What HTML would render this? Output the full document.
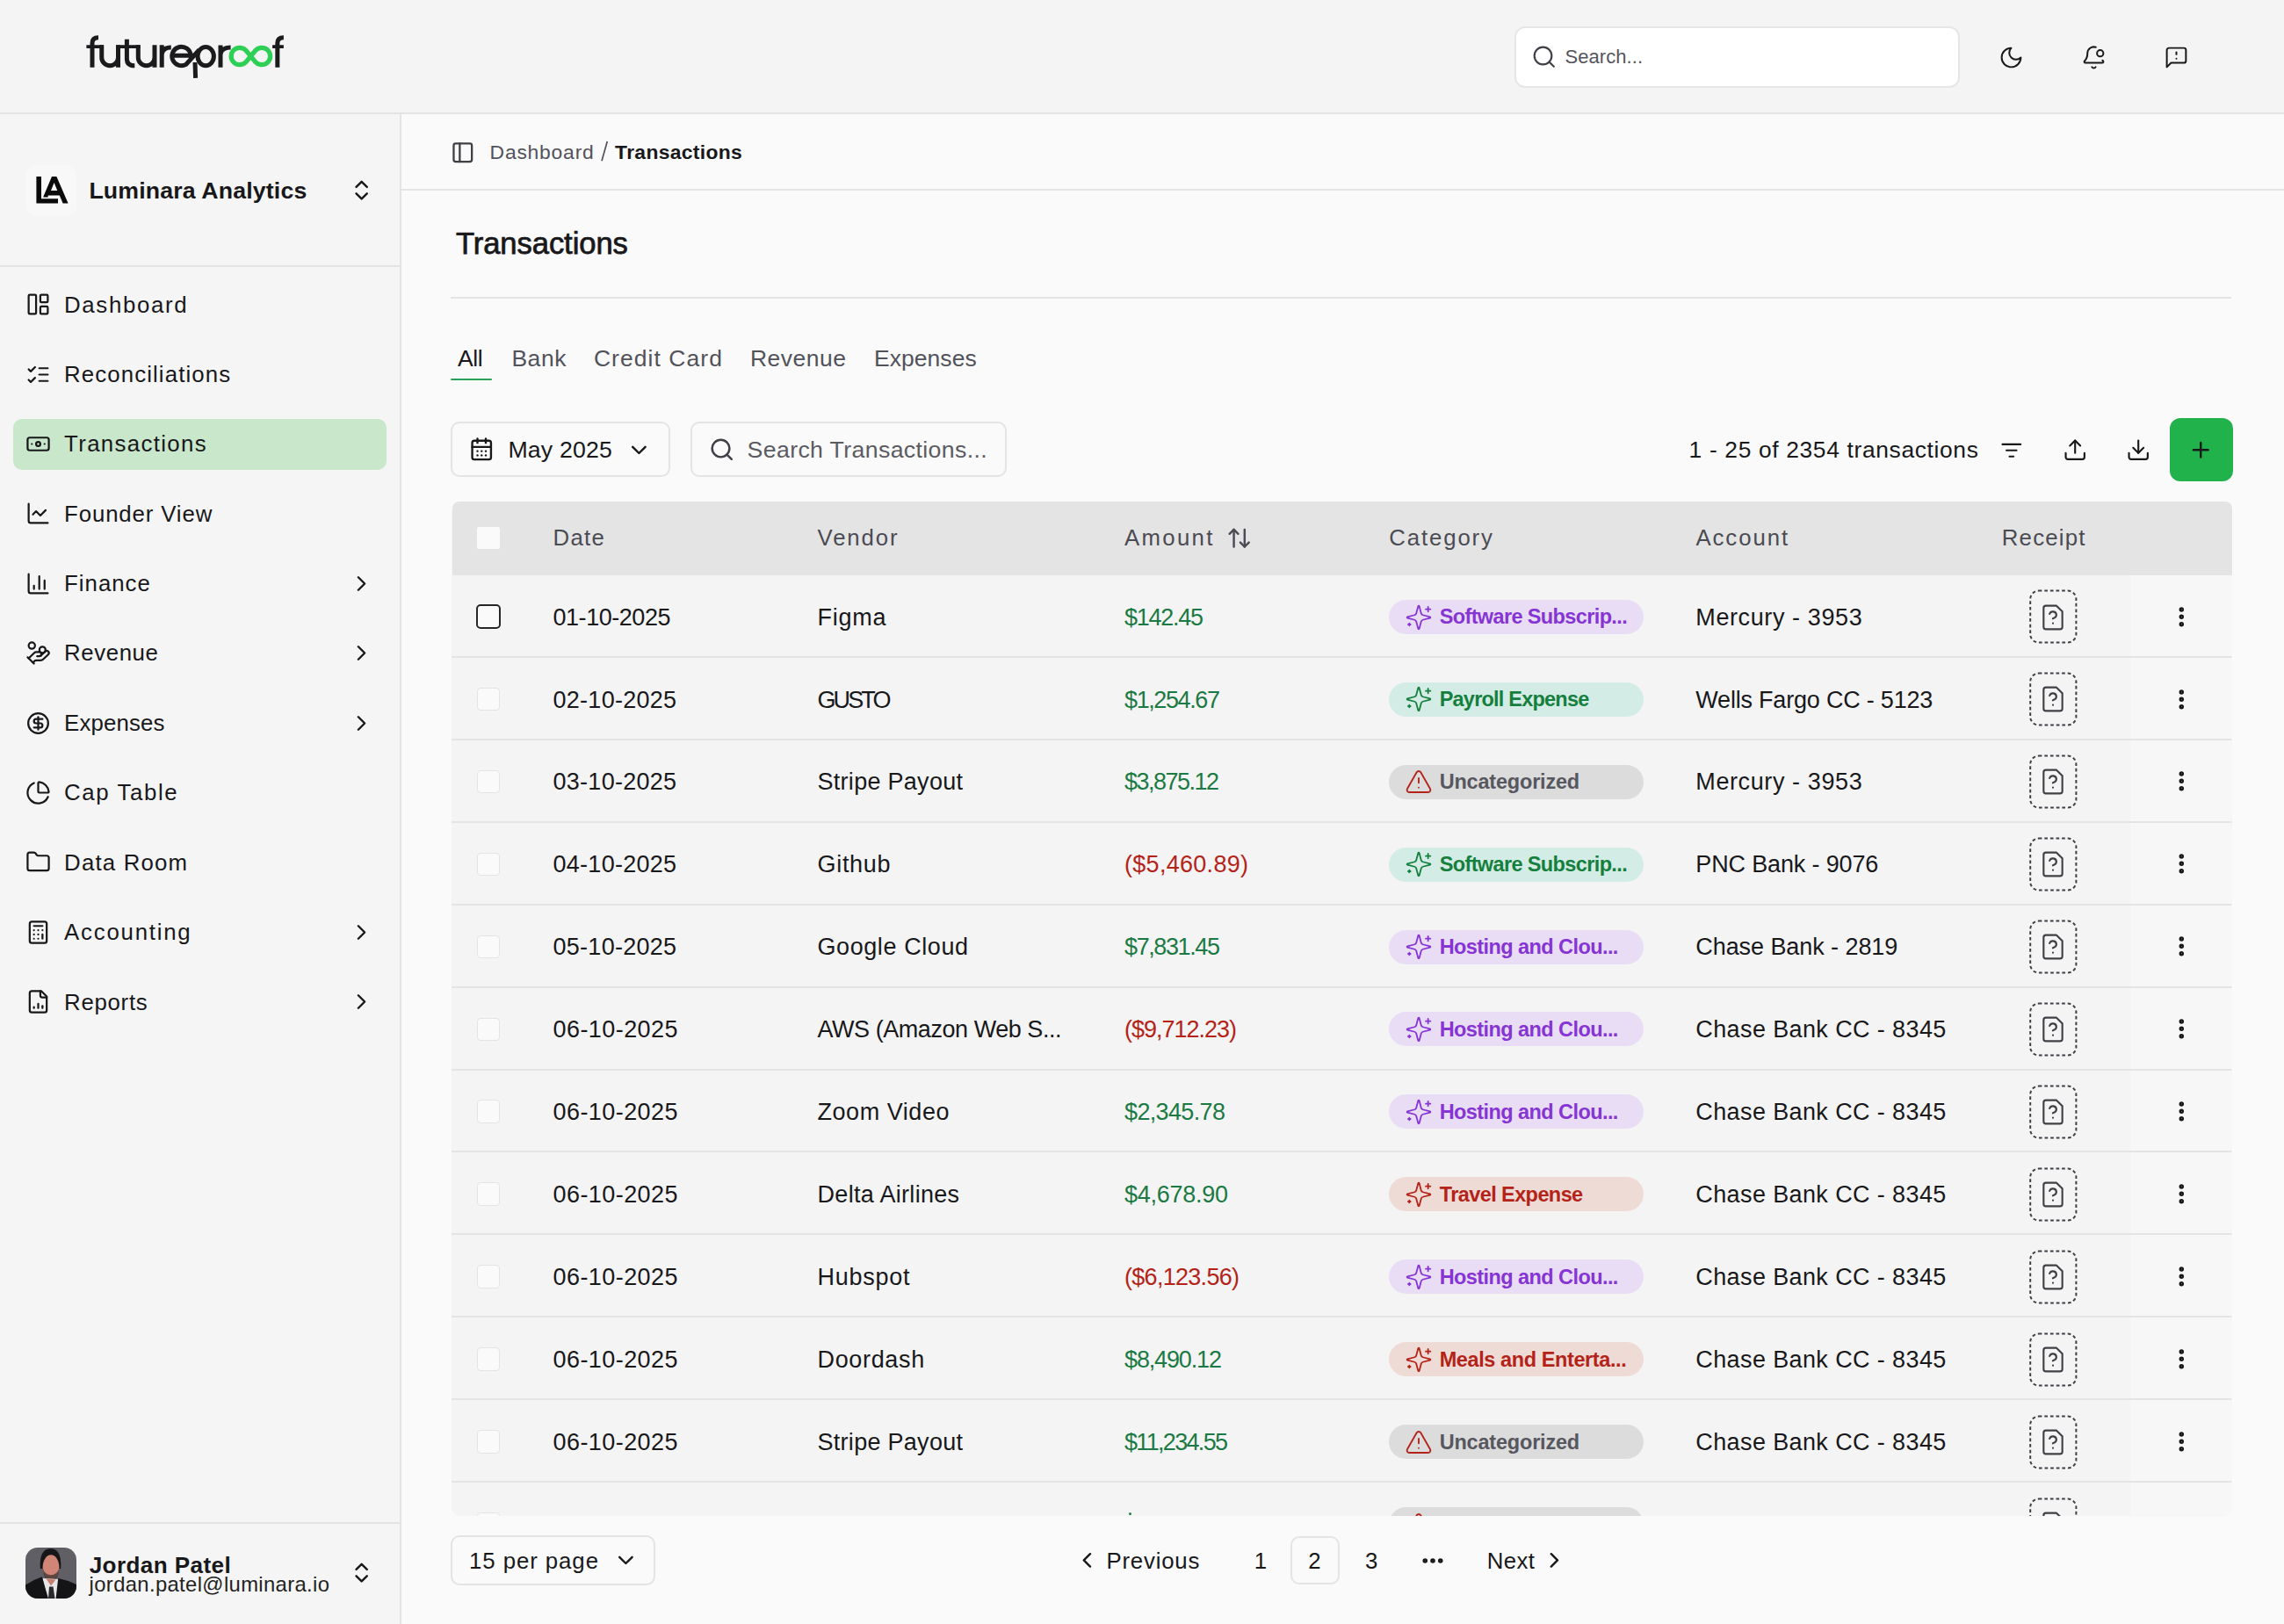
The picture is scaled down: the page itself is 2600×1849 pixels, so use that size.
<!DOCTYPE html><html><head><meta charset="utf-8"><style>
html,body{margin:0;padding:0;}
body{width:2600px;height:1849px;overflow:hidden;position:relative;background:#f4f4f5;font-family:"Liberation Sans",sans-serif;}
.t{position:absolute;white-space:nowrap;}
.r{position:absolute;}
.i{position:absolute;overflow:visible;}
</style></head><body>
<div class="r" style="left:0.00px;top:130.00px;width:455.00px;height:1719.00px;background:#f5f5f5;border-radius:0px;"></div>
<div class="r" style="left:457.00px;top:130.00px;width:2143.00px;height:1719.00px;background:#fafafa;border-radius:0px;"></div>
<div class="r" style="left:0.00px;top:128.00px;width:2600.00px;height:2.00px;background:#e4e4e4;border-radius:0px;"></div>
<div class="r" style="left:455.00px;top:130.00px;width:2.00px;height:1719.00px;background:#e4e4e4;border-radius:0px;"></div>
<svg class="i" style="left:0;top:0;width:340px;height:100px" viewBox="0 0 340 100" fill="none" stroke-linecap="butt">
<g stroke="#1b1b1d" stroke-width="5">
<path d="M105 76.8V49Q105 42.7 112 42.7"/>
<path d="M115.75 51.3V65.4A9.375 9.375 0 0 0 134.5 65.4M134.5 51.3V76.8"/>
<path d="M144.4 44.7V67Q144.4 74.8 153.3 74.8"/>
<path d="M157.3 51.3V65.4A9.35 9.35 0 0 0 176 65.4M176 51.3V76.8"/>
<path d="M184.2 51.3V76.8M184.2 62Q185 54 194.8 54"/>
<path d="M195.75 63.2H217.25A10.75 10.75 0 1 0 211.9 73.3L226.8 56.8"/>
<ellipse cx="234.2" cy="64.1" rx="9.2" ry="10.6"/>
<path d="M222 71L222.6 88.8"/>
<path d="M251 51.5V76.8M251 62Q252 54 262.6 54"/>
<path d="M315.85 76.8V49Q315.85 42.7 322.9 42.7"/>
</g>
<g stroke="#1b1b1d" stroke-width="3.8">
<path d="M98.4 53.2H118M132 53.2H159.6M310.1 53.2H322.9"/>
</g>
<path stroke="#2dcf55" stroke-width="5.3" d="M285.4 64L280.4 70.1A9.7 9.7 0 1 1 280.4 57.9L290.4 70.1A9.7 9.7 0 1 0 290.4 57.9Z"/>
</svg>
<div class="r" style="left:1724.00px;top:30.00px;width:507.00px;height:70.00px;box-sizing:border-box;border:2px solid #e6e6e6;background:#ffffff;border-radius:12px;"></div>
<svg class="i" style="left:1743.45px;top:49.85px;width:29.50px;height:29.50px;" viewBox="0 0 24 24" fill="none" stroke="#3f3f46" stroke-width="1.75" stroke-linecap="round" stroke-linejoin="round"><circle cx="11" cy="11" r="8"/><path d="m21 21-4.3-4.3"/></svg>
<div class="t" style="left:1781.50px;top:54.00px;font-size:22.00px;line-height:22.00px;color:#55555c;letter-spacing:0.069px;">Search...</div>
<svg class="i" style="left:2275.00px;top:50.80px;width:29.00px;height:29.00px;" viewBox="0 0 24 24" fill="none" stroke="#18181b" stroke-width="1.65" stroke-linecap="round" stroke-linejoin="round"><path d="M12 3a6 6 0 0 0 9 9 9 9 0 1 1-9-9Z"/></svg>
<svg class="i" style="left:2369.20px;top:50.80px;width:29.00px;height:29.00px;" viewBox="0 0 24 24" fill="none" stroke="#18181b" stroke-width="1.65" stroke-linecap="round" stroke-linejoin="round"><path d="M10.268 21a2 2 0 0 0 3.464 0"/><path d="M13.916 2.314A6 6 0 0 0 6 8c0 4.499-1.411 5.956-2.74 7.327A1 1 0 0 0 4 17h16a1 1 0 0 0 .74-1.673 9 9 0 0 1-.585-.665"/><circle cx="18" cy="8" r="3"/></svg>
<svg class="i" style="left:2462.70px;top:50.80px;width:29.00px;height:29.00px;" viewBox="0 0 24 24" fill="none" stroke="#18181b" stroke-width="1.65" stroke-linecap="round" stroke-linejoin="round"><path d="M21 15a2 2 0 0 1-2 2H7l-4 4V5a2 2 0 0 1 2-2h14a2 2 0 0 1 2 2z"/><path d="M12 7v2"/><path d="M12 13h.01"/></svg>
<div class="r" style="left:29.00px;top:188.00px;width:58.00px;height:58.00px;background:#f8f8f8;border-radius:12px;"></div>
<svg class="i" style="left:0;top:0;width:100px;height:260px" viewBox="0 0 100 260">
<path fill="#0a0a0a" d="M41.4 200.9H47V226.3H66V231.5H41.4Z"/>
<path fill="#0a0a0a" fill-rule="evenodd" d="M59 201H64.4L77.6 231.5H71.6L67.8 222.5H54.7V224.4H49.1ZM61.6 208L58 217H65.3Z"/>
</svg>
<div class="t" style="left:101.40px;top:204.00px;font-size:26.70px;line-height:26.70px;color:#18181b;letter-spacing:0.158px;font-weight:bold;">Luminara Analytics</div>
<svg class="i" style="left:396.85px;top:202.35px;width:29.30px;height:29.30px;" viewBox="0 0 24 24" fill="none" stroke="#18181b" stroke-width="2" stroke-linecap="round" stroke-linejoin="round"><path d="m7 15 5 5 5-5"/><path d="m7 9 5-5 5 5"/></svg>
<div class="r" style="left:0.00px;top:302.00px;width:455.00px;height:2.00px;background:#e4e4e4;border-radius:0px;"></div>
<div class="r" style="left:15.00px;top:477.00px;width:425.00px;height:58.00px;background:#c9e7ca;border-radius:10px;"></div>
<svg class="i" style="left:28.80px;top:332.10px;width:29.00px;height:29.00px;" viewBox="0 0 24 24" fill="none" stroke="#18181b" stroke-width="1.85" stroke-linecap="round" stroke-linejoin="round"><rect width="7" height="18" x="3" y="3" rx="1"/><rect width="7" height="7" x="14" y="3" rx="1"/><rect width="7" height="7" x="14" y="14" rx="1"/></svg>
<div class="t" style="left:73.10px;top:335.00px;font-size:25.80px;line-height:25.80px;color:#18181b;letter-spacing:1.648px;">Dashboard</div>
<svg class="i" style="left:28.80px;top:411.50px;width:29.00px;height:29.00px;" viewBox="0 0 24 24" fill="none" stroke="#18181b" stroke-width="1.85" stroke-linecap="round" stroke-linejoin="round"><path d="m3 17 2 2 4-4"/><path d="m3 7 2 2 4-4"/><path d="M13 6h8"/><path d="M13 12h8"/><path d="M13 18h8"/></svg>
<div class="t" style="left:73.10px;top:414.00px;font-size:25.80px;line-height:25.80px;color:#18181b;letter-spacing:1.105px;">Reconciliations</div>
<svg class="i" style="left:28.80px;top:490.90px;width:29.00px;height:29.00px;" viewBox="0 0 24 24" fill="none" stroke="#18181b" stroke-width="1.85" stroke-linecap="round" stroke-linejoin="round"><rect width="20" height="12" x="2" y="6" rx="2"/><circle cx="12" cy="12" r="2"/><path d="M6 12h.01M18 12h.01"/></svg>
<div class="t" style="left:73.10px;top:493.00px;font-size:25.80px;line-height:25.80px;color:#18181b;letter-spacing:1.341px;">Transactions</div>
<svg class="i" style="left:28.80px;top:570.30px;width:29.00px;height:29.00px;" viewBox="0 0 24 24" fill="none" stroke="#18181b" stroke-width="1.85" stroke-linecap="round" stroke-linejoin="round"><path d="M3 3v16a2 2 0 0 0 2 2h16"/><path d="m19 9-5 5-4-4-3 3"/></svg>
<div class="t" style="left:73.10px;top:573.00px;font-size:25.80px;line-height:25.80px;color:#18181b;letter-spacing:0.864px;">Founder View</div>
<svg class="i" style="left:28.80px;top:649.70px;width:29.00px;height:29.00px;" viewBox="0 0 24 24" fill="none" stroke="#18181b" stroke-width="1.85" stroke-linecap="round" stroke-linejoin="round"><path d="M3 3v16a2 2 0 0 0 2 2h16"/><path d="M18 17V9"/><path d="M13 17V5"/><path d="M8 17v-3"/></svg>
<div class="t" style="left:73.10px;top:652.00px;font-size:25.80px;line-height:25.80px;color:#18181b;letter-spacing:0.984px;">Finance</div>
<svg class="i" style="left:397.25px;top:649.70px;width:29.00px;height:29.00px;" viewBox="0 0 24 24" fill="none" stroke="#18181b" stroke-width="2" stroke-linecap="round" stroke-linejoin="round"><path d="m9 18 6-6-6-6"/></svg>
<svg class="i" style="left:28.80px;top:729.10px;width:29.00px;height:29.00px;" viewBox="0 0 24 24" fill="none" stroke="#18181b" stroke-width="1.85" stroke-linecap="round" stroke-linejoin="round"><path d="M11 15h2a2 2 0 1 0 0-4h-3c-.6 0-1.1.2-1.4.6L3 17"/><path d="m7 21 1.6-1.4c.3-.4.8-.6 1.4-.6h4c1.1 0 2.1-.4 2.8-1.2l4.6-4.4a2 2 0 0 0-2.75-2.91l-4.2 3.9"/><path d="m2 16 6 6"/><circle cx="16" cy="9" r="2.9"/><circle cx="6" cy="5" r="3"/></svg>
<div class="t" style="left:73.10px;top:731.00px;font-size:25.80px;line-height:25.80px;color:#18181b;letter-spacing:0.587px;">Revenue</div>
<svg class="i" style="left:397.25px;top:729.10px;width:29.00px;height:29.00px;" viewBox="0 0 24 24" fill="none" stroke="#18181b" stroke-width="2" stroke-linecap="round" stroke-linejoin="round"><path d="m9 18 6-6-6-6"/></svg>
<svg class="i" style="left:28.80px;top:808.50px;width:29.00px;height:29.00px;" viewBox="0 0 24 24" fill="none" stroke="#18181b" stroke-width="1.85" stroke-linecap="round" stroke-linejoin="round"><circle cx="12" cy="12" r="9.4"/><path d="M16 8h-6a2 2 0 1 0 0 4h4a2 2 0 1 1 0 4H8"/><path d="M12 18V6"/></svg>
<div class="t" style="left:73.10px;top:811.00px;font-size:25.80px;line-height:25.80px;color:#18181b;letter-spacing:0.155px;">Expenses</div>
<svg class="i" style="left:397.25px;top:808.50px;width:29.00px;height:29.00px;" viewBox="0 0 24 24" fill="none" stroke="#18181b" stroke-width="2" stroke-linecap="round" stroke-linejoin="round"><path d="m9 18 6-6-6-6"/></svg>
<svg class="i" style="left:28.80px;top:887.90px;width:29.00px;height:29.00px;" viewBox="0 0 24 24" fill="none" stroke="#18181b" stroke-width="1.85" stroke-linecap="round" stroke-linejoin="round"><path d="M21 12c.552 0 1.005-.449.95-.998a10 10 0 0 0-8.953-8.951c-.55-.055-.998.398-.998.95v8a1 1 0 0 0 1 1z"/><path d="M21.21 15.89A10 10 0 1 1 8 2.83"/></svg>
<div class="t" style="left:73.10px;top:890.00px;font-size:25.80px;line-height:25.80px;color:#18181b;letter-spacing:1.611px;">Cap Table</div>
<svg class="i" style="left:28.80px;top:967.30px;width:29.00px;height:29.00px;" viewBox="0 0 24 24" fill="none" stroke="#18181b" stroke-width="1.85" stroke-linecap="round" stroke-linejoin="round"><path d="M20 20a2 2 0 0 0 2-2V8a2 2 0 0 0-2-2h-7.9a2 2 0 0 1-1.69-.9L9.6 3.9A2 2 0 0 0 7.93 3H4a2 2 0 0 0-2 2v13a2 2 0 0 0 2 2Z"/></svg>
<div class="t" style="left:73.10px;top:970.00px;font-size:25.80px;line-height:25.80px;color:#18181b;letter-spacing:1.188px;">Data Room</div>
<svg class="i" style="left:28.80px;top:1046.70px;width:29.00px;height:29.00px;" viewBox="0 0 24 24" fill="none" stroke="#18181b" stroke-width="1.85" stroke-linecap="round" stroke-linejoin="round"><rect width="16" height="20" x="4" y="2" rx="2"/><line x1="8" x2="16" y1="6" y2="6"/><line x1="16" x2="16" y1="14" y2="18"/><path d="M16 10h.01"/><path d="M12 10h.01"/><path d="M8 10h.01"/><path d="M12 14h.01"/><path d="M8 14h.01"/><path d="M12 18h.01"/><path d="M8 18h.01"/></svg>
<div class="t" style="left:73.10px;top:1049.00px;font-size:25.80px;line-height:25.80px;color:#18181b;letter-spacing:1.771px;">Accounting</div>
<svg class="i" style="left:397.25px;top:1046.70px;width:29.00px;height:29.00px;" viewBox="0 0 24 24" fill="none" stroke="#18181b" stroke-width="2" stroke-linecap="round" stroke-linejoin="round"><path d="m9 18 6-6-6-6"/></svg>
<svg class="i" style="left:28.80px;top:1126.10px;width:29.00px;height:29.00px;" viewBox="0 0 24 24" fill="none" stroke="#18181b" stroke-width="1.85" stroke-linecap="round" stroke-linejoin="round"><path d="M15 2H6a2 2 0 0 0-2 2v16a2 2 0 0 0 2 2h12a2 2 0 0 0 2-2V7Z"/><path d="M14 2v4a2 2 0 0 0 2 2h4"/><path d="M8 18v-1"/><path d="M12 18v-4"/><path d="M16 18v-2"/></svg>
<div class="t" style="left:73.10px;top:1129.00px;font-size:25.80px;line-height:25.80px;color:#18181b;letter-spacing:0.712px;">Reports</div>
<svg class="i" style="left:397.25px;top:1126.10px;width:29.00px;height:29.00px;" viewBox="0 0 24 24" fill="none" stroke="#18181b" stroke-width="2" stroke-linecap="round" stroke-linejoin="round"><path d="m9 18 6-6-6-6"/></svg>
<div class="r" style="left:0.00px;top:1733.00px;width:455.00px;height:2.00px;background:#e4e4e4;border-radius:0px;"></div>
<svg class="i" style="left:29px;top:1762px;width:58px;height:58px;border-radius:14px;overflow:hidden" viewBox="0 0 58 58">
<rect width="58" height="58" fill="#5f5f65"/>
<path d="M16.8 24Q15.5 1.2 28.5 1.2Q41.5 1.2 40.2 24Z" fill="#161618"/>
<ellipse cx="29" cy="22.5" rx="9.4" ry="14.3" fill="#d08576"/>
<path d="M19.8 24Q20.5 37.5 29 37.8Q37.5 37.5 38.2 24Q36 31 29 31.2Q22 31 19.8 24Z" fill="#3b2f2d" opacity="0.75"/>
<path d="M19.5 35L38.5 36L35.8 58H25Z" fill="#e6e6e8"/>
<path d="M23.5 35.5L34.5 36.5L29 43.5Z" fill="#c98070"/>
<path d="M27 44.5L31.5 44.5L33.5 58H26Z" fill="#2a2a2d"/>
<path d="M0 42.5Q8 37 18.8 33.3L26 58H0Z" fill="#141416"/>
<path d="M58 42Q48 37 37.2 35L34.6 58H58Z" fill="#141416"/>
</svg>
<div class="t" style="left:101.70px;top:1769.00px;font-size:26.10px;line-height:26.10px;color:#18181b;letter-spacing:0.395px;font-weight:bold;">Jordan Patel</div>
<div class="t" style="left:101.59px;top:1792.00px;font-size:23.80px;line-height:23.80px;color:#222;letter-spacing:0.368px;">jordan.patel@luminara.io</div>
<svg class="i" style="left:396.75px;top:1776.35px;width:29.30px;height:29.30px;" viewBox="0 0 24 24" fill="none" stroke="#18181b" stroke-width="2" stroke-linecap="round" stroke-linejoin="round"><path d="m7 15 5 5 5-5"/><path d="m7 9 5-5 5 5"/></svg>
<svg class="i" style="left:513.40px;top:159.50px;width:27.60px;height:27.60px;" viewBox="0 0 24 24" fill="none" stroke="#3f3f46" stroke-width="2" stroke-linecap="round" stroke-linejoin="round"><rect width="18" height="18" x="3" y="3" rx="2"/><path d="M9 3v18"/></svg>
<div class="t" style="left:557.60px;top:162.00px;font-size:22.90px;line-height:22.90px;color:#52525b;letter-spacing:0.772px;">Dashboard</div>
<svg class="i" style="left:680px;top:156px;width:16px;height:32px" viewBox="680 156 16 32"><path d="M691.3 161L685 183.2" stroke="#52525b" stroke-width="1.7" stroke-linecap="butt"/></svg>
<div class="t" style="left:700.10px;top:162.00px;font-size:22.90px;line-height:22.90px;color:#18181b;letter-spacing:0.321px;font-weight:bold;">Transactions</div>
<div class="r" style="left:457.00px;top:215.00px;width:2143.00px;height:2.00px;background:#e4e4e4;border-radius:0px;"></div>
<div class="t" style="left:519.00px;top:260.00px;font-size:34.60px;line-height:34.60px;color:#18181b;letter-spacing:-0.073px;-webkit-text-stroke:0.75px #18181b;">Transactions</div>
<div class="r" style="left:513.00px;top:337.50px;width:2027.00px;height:2.00px;background:#e4e4e4;border-radius:0px;"></div>
<div class="t" style="left:521.00px;top:395.00px;font-size:26.50px;line-height:26.50px;color:#18181b;letter-spacing:-0.371px;">All</div>
<div class="t" style="left:582.40px;top:395.00px;font-size:26.50px;line-height:26.50px;color:#52525b;letter-spacing:0.551px;">Bank</div>
<div class="t" style="left:675.90px;top:395.00px;font-size:26.50px;line-height:26.50px;color:#52525b;letter-spacing:1.061px;">Credit Card</div>
<div class="t" style="left:854.00px;top:395.00px;font-size:26.50px;line-height:26.50px;color:#52525b;letter-spacing:0.487px;">Revenue</div>
<div class="t" style="left:995.00px;top:395.00px;font-size:26.50px;line-height:26.50px;color:#52525b;letter-spacing:0.045px;">Expenses</div>
<div class="r" style="left:512.70px;top:431.40px;width:47.30px;height:2.10px;background:#25a354;border-radius:1px;"></div>
<div class="r" style="left:513.00px;top:480.00px;width:250.00px;height:63.00px;box-sizing:border-box;border:2px solid #e4e4e4;background:transparent;border-radius:10px;"></div>
<svg class="i" style="left:534.25px;top:497.45px;width:28.50px;height:28.50px;" viewBox="0 0 24 24" fill="none" stroke="#18181b" stroke-width="2" stroke-linecap="round" stroke-linejoin="round"><path d="M8 2v4"/><path d="M16 2v4"/><rect width="18" height="18" x="3" y="4" rx="2"/><path d="M3 10h18"/><path d="M8 14h.01"/><path d="M12 14h.01"/><path d="M16 14h.01"/><path d="M8 18h.01"/><path d="M12 18h.01"/><path d="M16 18h.01"/></svg>
<div class="t" style="left:578.40px;top:499.00px;font-size:26.70px;line-height:26.70px;color:#18181b;letter-spacing:0.191px;">May 2025</div>
<svg class="i" style="left:713.00px;top:497.60px;width:28.80px;height:28.80px;" viewBox="0 0 24 24" fill="none" stroke="#18181b" stroke-width="2" stroke-linecap="round" stroke-linejoin="round"><path d="m6 9 6 6 6-6"/></svg>
<div class="r" style="left:786.00px;top:480.00px;width:360.00px;height:63.00px;box-sizing:border-box;border:2px solid #e4e4e4;background:transparent;border-radius:10px;"></div>
<svg class="i" style="left:806.95px;top:496.75px;width:29.50px;height:29.50px;" viewBox="0 0 24 24" fill="none" stroke="#3f3f46" stroke-width="2" stroke-linecap="round" stroke-linejoin="round"><circle cx="11" cy="11" r="8"/><path d="m21 21-4.3-4.3"/></svg>
<div class="t" style="left:850.60px;top:499.00px;font-size:26.70px;line-height:26.70px;color:#5b5b63;letter-spacing:0.360px;">Search Transactions...</div>
<div class="t" style="left:1922.60px;top:499.00px;font-size:26.40px;line-height:26.40px;color:#18181b;letter-spacing:0.646px;">1 - 25 of 2354 transactions</div>
<svg class="i" style="left:2275.70px;top:498.70px;width:27.60px;height:27.60px;" viewBox="0 0 24 24" fill="none" stroke="#18181b" stroke-width="1.8" stroke-linecap="round" stroke-linejoin="round"><path d="M3 6h18"/><path d="M7 12h10"/><path d="M10 18h4"/></svg>
<svg class="i" style="left:2347.50px;top:498.30px;width:28.40px;height:28.40px;" viewBox="0 0 24 24" fill="none" stroke="#18181b" stroke-width="1.8" stroke-linecap="round" stroke-linejoin="round"><path d="M21 15v4a2 2 0 0 1-2 2H5a2 2 0 0 1-2-2v-4"/><polyline points="17 8 12 3 7 8"/><line x1="12" x2="12" y1="3" y2="15"/></svg>
<svg class="i" style="left:2419.60px;top:498.30px;width:28.40px;height:28.40px;" viewBox="0 0 24 24" fill="none" stroke="#18181b" stroke-width="1.8" stroke-linecap="round" stroke-linejoin="round"><path d="M21 15v4a2 2 0 0 1-2 2H5a2 2 0 0 1-2-2v-4"/><polyline points="7 10 12 15 17 10"/><line x1="12" x2="12" y1="15" y2="3"/></svg>
<div class="r" style="left:2470.00px;top:476.00px;width:72.00px;height:72.00px;background:#22b24c;border-radius:12px;"></div>
<svg class="i" style="left:2491.25px;top:497.75px;width:28.50px;height:28.50px;" viewBox="0 0 24 24" fill="none" stroke="#18181b" stroke-width="2" stroke-linecap="round" stroke-linejoin="round"><path d="M5 12h14"/><path d="M12 5v14"/></svg>
<div class="r" style="left:514px;top:571px;width:2026.5px;height:1155px;border-radius:10px;overflow:hidden;background:#f4f4f5">
</div>
<div class="r" style="left:514.50px;top:571.00px;width:2026.00px;height:84.00px;background:#e4e4e5;border-radius:0px;border-radius:8px 8px 0 0;"></div>
<div class="r" style="left:543.40px;top:600.00px;width:26.00px;height:25.00px;background:#fafafa;border-radius:2.5px;"></div>
<div class="t" style="left:629.50px;top:600.00px;font-size:25.80px;line-height:25.80px;color:#4b4b53;letter-spacing:1.303px;">Date</div>
<div class="t" style="left:930.50px;top:600.00px;font-size:25.80px;line-height:25.80px;color:#4b4b53;letter-spacing:1.848px;">Vendor</div>
<div class="t" style="left:1280.10px;top:600.00px;font-size:25.80px;line-height:25.80px;color:#4b4b53;letter-spacing:2.279px;">Amount</div>
<div class="t" style="left:1581.20px;top:600.00px;font-size:25.80px;line-height:25.80px;color:#4b4b53;letter-spacing:1.872px;">Category</div>
<div class="t" style="left:1930.40px;top:600.00px;font-size:25.80px;line-height:25.80px;color:#4b4b53;letter-spacing:1.914px;">Account</div>
<div class="t" style="left:2278.80px;top:600.00px;font-size:25.80px;line-height:25.80px;color:#4b4b53;letter-spacing:1.185px;">Receipt</div>
<svg class="i" style="left:1396.20px;top:597.60px;width:29.40px;height:29.40px;" viewBox="0 0 24 24" fill="none" stroke="#4b4b53" stroke-width="2" stroke-linecap="round" stroke-linejoin="round"><path d="m21 16-4 4-4-4"/><path d="M17 20V4"/><path d="m3 8 4-4 4 4"/><path d="M7 4v16"/></svg>
<div class="r" style="left:0;top:655px;width:2600px;height:1071px;overflow:hidden;clip-path:inset(0 59.5px 0 514px round 0 0 10px 10px)">
<div class="r" style="left:2425.00px;top:0.00px;width:115.50px;height:1070.00px;background:#f7f7f7;border-radius:0px;"></div>
<div class="r" style="left:514.00px;top:91.90px;width:2026.50px;height:2.00px;background:#e4e4e4;border-radius:0px;"></div>
<div class="r" style="left:542.00px;top:33.00px;width:28.30px;height:28.40px;box-sizing:border-box;border:2.1px solid #27272a;background:#fafafa;border-radius:5px;"></div>
<div class="t" style="left:629.50px;top:35.00px;font-size:27.00px;line-height:27.00px;color:#18181b;letter-spacing:-0.456px;">01-10-2025</div>
<div class="t" style="left:930.50px;top:35.00px;font-size:27.00px;line-height:27.00px;color:#18181b;letter-spacing:0.742px;">Figma</div>
<div class="t" style="left:1280.00px;top:35.00px;font-size:27.00px;line-height:27.00px;color:#1b7a43;letter-spacing:-1.268px;">$142.45</div>
<div class="r" style="left:1580.70px;top:27.80px;width:290.70px;height:39.00px;background:#e9ddf5;border-radius:19.5px;"></div>
<svg class="i" style="left:1598.50px;top:31.50px;width:32.00px;height:32.00px;" viewBox="0 0 24 24" fill="none" stroke="#8634d4" stroke-width="1.35" stroke-linecap="round" stroke-linejoin="round"><path d="M9.937 15.5A2 2 0 0 0 8.5 14.063l-6.135-1.582a.5.5 0 0 1 0-.962L8.5 9.936A2 2 0 0 0 9.937 8.5l1.582-6.135a.5.5 0 0 1 .963 0L14.063 8.5A2 2 0 0 0 15.5 9.937l6.135 1.581a.5.5 0 0 1 0 .964L15.5 14.063a2 2 0 0 0-1.437 1.437l-1.582 6.135a.5.5 0 0 1-.963 0z"/><path d="M20 3v4"/><path d="M22 5h-4"/><path d="M4 17v2"/><path d="M5 18H3"/></svg>
<div class="t" style="left:1638.70px;top:36.00px;font-size:23.50px;line-height:23.50px;color:#8634d4;letter-spacing:-0.627px;font-weight:bold;">Software Subscrip...</div>
<div class="t" style="left:1930.30px;top:35.00px;font-size:27.00px;line-height:27.00px;color:#18181b;letter-spacing:0.602px;">Mercury - 3953</div>
<svg class="i" style="left:2309px;top:15.30px;width:57px;height:64px" viewBox="0 0 57 64"><rect x="2.2" y="2.6" width="52.2" height="58.9" rx="9.5" fill="none" stroke="#3f3f46" stroke-width="2" stroke-dasharray="3.7 2.9"/></svg>
<svg class="i" style="left:2321.30px;top:31.50px;width:32.00px;height:32.00px;" viewBox="0 0 24 24" fill="none" stroke="#3f3f46" stroke-width="1.6" stroke-linecap="round" stroke-linejoin="round"><path d="M12 17h.01"/><path d="M15 2H6a2 2 0 0 0-2 2v16a2 2 0 0 0 2 2h12a2 2 0 0 0 2-2V7z"/><path d="M9.1 9a3 3 0 0 1 5.82 1c0 2-3 3-3 3"/></svg>
<svg class="i" style="left:2469.30px;top:32.60px;width:28.60px;height:28.60px;" viewBox="0 0 24 24" fill="none" stroke="#18181b" stroke-width="2.6" stroke-linecap="round" stroke-linejoin="round"><circle cx="12" cy="12" r="1"/><circle cx="12" cy="5" r="1"/><circle cx="12" cy="19" r="1"/></svg>
<div class="r" style="left:514.00px;top:185.83px;width:2026.50px;height:2.00px;background:#e4e4e4;border-radius:0px;"></div>
<div class="r" style="left:542.60px;top:127.83px;width:26.80px;height:26.60px;box-sizing:border-box;border:1.3px solid #e4e4e4;background:#fafafa;border-radius:4px;"></div>
<div class="t" style="left:629.50px;top:129.00px;font-size:27.00px;line-height:27.00px;color:#18181b;letter-spacing:0.277px;">02-10-2025</div>
<div class="t" style="left:930.50px;top:129.00px;font-size:27.00px;line-height:27.00px;color:#18181b;letter-spacing:-2.881px;">GUSTO</div>
<div class="t" style="left:1280.00px;top:129.00px;font-size:27.00px;line-height:27.00px;color:#1b7a43;letter-spacing:-1.390px;">$1,254.67</div>
<div class="r" style="left:1580.70px;top:121.73px;width:290.70px;height:39.00px;background:#d3ece6;border-radius:19.5px;"></div>
<svg class="i" style="left:1598.50px;top:125.43px;width:32.00px;height:32.00px;" viewBox="0 0 24 24" fill="none" stroke="#15803d" stroke-width="1.35" stroke-linecap="round" stroke-linejoin="round"><path d="M9.937 15.5A2 2 0 0 0 8.5 14.063l-6.135-1.582a.5.5 0 0 1 0-.962L8.5 9.936A2 2 0 0 0 9.937 8.5l1.582-6.135a.5.5 0 0 1 .963 0L14.063 8.5A2 2 0 0 0 15.5 9.937l6.135 1.581a.5.5 0 0 1 0 .964L15.5 14.063a2 2 0 0 0-1.437 1.437l-1.582 6.135a.5.5 0 0 1-.963 0z"/><path d="M20 3v4"/><path d="M22 5h-4"/><path d="M4 17v2"/><path d="M5 18H3"/></svg>
<div class="t" style="left:1638.70px;top:130.00px;font-size:23.50px;line-height:23.50px;color:#15803d;letter-spacing:-0.783px;font-weight:bold;">Payroll Expense</div>
<div class="t" style="left:1930.30px;top:129.00px;font-size:27.00px;line-height:27.00px;color:#18181b;letter-spacing:-0.205px;">Wells Fargo CC - 5123</div>
<svg class="i" style="left:2309px;top:109.23px;width:57px;height:64px" viewBox="0 0 57 64"><rect x="2.2" y="2.6" width="52.2" height="58.9" rx="9.5" fill="none" stroke="#3f3f46" stroke-width="2" stroke-dasharray="3.7 2.9"/></svg>
<svg class="i" style="left:2321.30px;top:125.43px;width:32.00px;height:32.00px;" viewBox="0 0 24 24" fill="none" stroke="#3f3f46" stroke-width="1.6" stroke-linecap="round" stroke-linejoin="round"><path d="M12 17h.01"/><path d="M15 2H6a2 2 0 0 0-2 2v16a2 2 0 0 0 2 2h12a2 2 0 0 0 2-2V7z"/><path d="M9.1 9a3 3 0 0 1 5.82 1c0 2-3 3-3 3"/></svg>
<svg class="i" style="left:2469.30px;top:126.53px;width:28.60px;height:28.60px;" viewBox="0 0 24 24" fill="none" stroke="#18181b" stroke-width="2.6" stroke-linecap="round" stroke-linejoin="round"><circle cx="12" cy="12" r="1"/><circle cx="12" cy="5" r="1"/><circle cx="12" cy="19" r="1"/></svg>
<div class="r" style="left:514.00px;top:279.76px;width:2026.50px;height:2.00px;background:#e4e4e4;border-radius:0px;"></div>
<div class="r" style="left:542.60px;top:221.76px;width:26.80px;height:26.60px;box-sizing:border-box;border:1.3px solid #e4e4e4;background:#fafafa;border-radius:4px;"></div>
<div class="t" style="left:629.50px;top:222.00px;font-size:27.00px;line-height:27.00px;color:#18181b;letter-spacing:0.277px;">03-10-2025</div>
<div class="t" style="left:930.50px;top:222.00px;font-size:27.00px;line-height:27.00px;color:#18181b;letter-spacing:0.285px;">Stripe Payout</div>
<div class="t" style="left:1280.00px;top:222.00px;font-size:27.00px;line-height:27.00px;color:#1b7a43;letter-spacing:-1.515px;">$3,875.12</div>
<div class="r" style="left:1580.70px;top:215.66px;width:290.70px;height:39.00px;background:#dcdcdd;border-radius:19.5px;"></div>
<svg class="i" style="left:1598.50px;top:219.16px;width:32.00px;height:32.00px;" viewBox="0 0 24 24" fill="none" stroke="#b42318" stroke-width="1.4" stroke-linecap="round" stroke-linejoin="round"><path d="m21.73 18-8-14a2 2 0 0 0-3.48 0l-8 14A2 2 0 0 0 4 21h16a2 2 0 0 0 1.73-3"/><path d="M12 9v4"/><path d="M12 17h.01"/></svg>
<div class="t" style="left:1638.70px;top:224.00px;font-size:23.50px;line-height:23.50px;color:#57575f;letter-spacing:-0.201px;font-weight:bold;">Uncategorized</div>
<div class="t" style="left:1930.30px;top:222.00px;font-size:27.00px;line-height:27.00px;color:#18181b;letter-spacing:0.602px;">Mercury - 3953</div>
<svg class="i" style="left:2309px;top:203.16px;width:57px;height:64px" viewBox="0 0 57 64"><rect x="2.2" y="2.6" width="52.2" height="58.9" rx="9.5" fill="none" stroke="#3f3f46" stroke-width="2" stroke-dasharray="3.7 2.9"/></svg>
<svg class="i" style="left:2321.30px;top:219.36px;width:32.00px;height:32.00px;" viewBox="0 0 24 24" fill="none" stroke="#3f3f46" stroke-width="1.6" stroke-linecap="round" stroke-linejoin="round"><path d="M12 17h.01"/><path d="M15 2H6a2 2 0 0 0-2 2v16a2 2 0 0 0 2 2h12a2 2 0 0 0 2-2V7z"/><path d="M9.1 9a3 3 0 0 1 5.82 1c0 2-3 3-3 3"/></svg>
<svg class="i" style="left:2469.30px;top:220.46px;width:28.60px;height:28.60px;" viewBox="0 0 24 24" fill="none" stroke="#18181b" stroke-width="2.6" stroke-linecap="round" stroke-linejoin="round"><circle cx="12" cy="12" r="1"/><circle cx="12" cy="5" r="1"/><circle cx="12" cy="19" r="1"/></svg>
<div class="r" style="left:514.00px;top:373.69px;width:2026.50px;height:2.00px;background:#e4e4e4;border-radius:0px;"></div>
<div class="r" style="left:542.60px;top:315.69px;width:26.80px;height:26.60px;box-sizing:border-box;border:1.3px solid #e4e4e4;background:#fafafa;border-radius:4px;"></div>
<div class="t" style="left:629.50px;top:316.00px;font-size:27.00px;line-height:27.00px;color:#18181b;letter-spacing:0.277px;">04-10-2025</div>
<div class="t" style="left:930.50px;top:316.00px;font-size:27.00px;line-height:27.00px;color:#18181b;letter-spacing:0.692px;">Github</div>
<div class="t" style="left:1280.00px;top:316.00px;font-size:27.00px;line-height:27.00px;color:#b42318;letter-spacing:0.290px;">($5,460.89)</div>
<div class="r" style="left:1580.70px;top:309.59px;width:290.70px;height:39.00px;background:#d3ece6;border-radius:19.5px;"></div>
<svg class="i" style="left:1598.50px;top:313.29px;width:32.00px;height:32.00px;" viewBox="0 0 24 24" fill="none" stroke="#15803d" stroke-width="1.35" stroke-linecap="round" stroke-linejoin="round"><path d="M9.937 15.5A2 2 0 0 0 8.5 14.063l-6.135-1.582a.5.5 0 0 1 0-.962L8.5 9.936A2 2 0 0 0 9.937 8.5l1.582-6.135a.5.5 0 0 1 .963 0L14.063 8.5A2 2 0 0 0 15.5 9.937l6.135 1.581a.5.5 0 0 1 0 .964L15.5 14.063a2 2 0 0 0-1.437 1.437l-1.582 6.135a.5.5 0 0 1-.963 0z"/><path d="M20 3v4"/><path d="M22 5h-4"/><path d="M4 17v2"/><path d="M5 18H3"/></svg>
<div class="t" style="left:1638.70px;top:318.00px;font-size:23.50px;line-height:23.50px;color:#15803d;letter-spacing:-0.627px;font-weight:bold;">Software Subscrip...</div>
<div class="t" style="left:1930.30px;top:316.00px;font-size:27.00px;line-height:27.00px;color:#18181b;letter-spacing:-0.151px;">PNC Bank - 9076</div>
<svg class="i" style="left:2309px;top:297.09px;width:57px;height:64px" viewBox="0 0 57 64"><rect x="2.2" y="2.6" width="52.2" height="58.9" rx="9.5" fill="none" stroke="#3f3f46" stroke-width="2" stroke-dasharray="3.7 2.9"/></svg>
<svg class="i" style="left:2321.30px;top:313.29px;width:32.00px;height:32.00px;" viewBox="0 0 24 24" fill="none" stroke="#3f3f46" stroke-width="1.6" stroke-linecap="round" stroke-linejoin="round"><path d="M12 17h.01"/><path d="M15 2H6a2 2 0 0 0-2 2v16a2 2 0 0 0 2 2h12a2 2 0 0 0 2-2V7z"/><path d="M9.1 9a3 3 0 0 1 5.82 1c0 2-3 3-3 3"/></svg>
<svg class="i" style="left:2469.30px;top:314.39px;width:28.60px;height:28.60px;" viewBox="0 0 24 24" fill="none" stroke="#18181b" stroke-width="2.6" stroke-linecap="round" stroke-linejoin="round"><circle cx="12" cy="12" r="1"/><circle cx="12" cy="5" r="1"/><circle cx="12" cy="19" r="1"/></svg>
<div class="r" style="left:514.00px;top:467.62px;width:2026.50px;height:2.00px;background:#e4e4e4;border-radius:0px;"></div>
<div class="r" style="left:542.60px;top:409.62px;width:26.80px;height:26.60px;box-sizing:border-box;border:1.3px solid #e4e4e4;background:#fafafa;border-radius:4px;"></div>
<div class="t" style="left:629.50px;top:410.00px;font-size:27.00px;line-height:27.00px;color:#18181b;letter-spacing:0.277px;">05-10-2025</div>
<div class="t" style="left:930.50px;top:410.00px;font-size:27.00px;line-height:27.00px;color:#18181b;letter-spacing:0.581px;">Google Cloud</div>
<div class="t" style="left:1280.00px;top:410.00px;font-size:27.00px;line-height:27.00px;color:#1b7a43;letter-spacing:-1.390px;">$7,831.45</div>
<div class="r" style="left:1580.70px;top:403.52px;width:290.70px;height:39.00px;background:#e9ddf5;border-radius:19.5px;"></div>
<svg class="i" style="left:1598.50px;top:407.22px;width:32.00px;height:32.00px;" viewBox="0 0 24 24" fill="none" stroke="#8634d4" stroke-width="1.35" stroke-linecap="round" stroke-linejoin="round"><path d="M9.937 15.5A2 2 0 0 0 8.5 14.063l-6.135-1.582a.5.5 0 0 1 0-.962L8.5 9.936A2 2 0 0 0 9.937 8.5l1.582-6.135a.5.5 0 0 1 .963 0L14.063 8.5A2 2 0 0 0 15.5 9.937l6.135 1.581a.5.5 0 0 1 0 .964L15.5 14.063a2 2 0 0 0-1.437 1.437l-1.582 6.135a.5.5 0 0 1-.963 0z"/><path d="M20 3v4"/><path d="M22 5h-4"/><path d="M4 17v2"/><path d="M5 18H3"/></svg>
<div class="t" style="left:1638.70px;top:412.00px;font-size:23.50px;line-height:23.50px;color:#8634d4;letter-spacing:-0.577px;font-weight:bold;">Hosting and Clou...</div>
<div class="t" style="left:1930.30px;top:410.00px;font-size:27.00px;line-height:27.00px;color:#18181b;letter-spacing:-0.072px;">Chase Bank - 2819</div>
<svg class="i" style="left:2309px;top:391.02px;width:57px;height:64px" viewBox="0 0 57 64"><rect x="2.2" y="2.6" width="52.2" height="58.9" rx="9.5" fill="none" stroke="#3f3f46" stroke-width="2" stroke-dasharray="3.7 2.9"/></svg>
<svg class="i" style="left:2321.30px;top:407.22px;width:32.00px;height:32.00px;" viewBox="0 0 24 24" fill="none" stroke="#3f3f46" stroke-width="1.6" stroke-linecap="round" stroke-linejoin="round"><path d="M12 17h.01"/><path d="M15 2H6a2 2 0 0 0-2 2v16a2 2 0 0 0 2 2h12a2 2 0 0 0 2-2V7z"/><path d="M9.1 9a3 3 0 0 1 5.82 1c0 2-3 3-3 3"/></svg>
<svg class="i" style="left:2469.30px;top:408.32px;width:28.60px;height:28.60px;" viewBox="0 0 24 24" fill="none" stroke="#18181b" stroke-width="2.6" stroke-linecap="round" stroke-linejoin="round"><circle cx="12" cy="12" r="1"/><circle cx="12" cy="5" r="1"/><circle cx="12" cy="19" r="1"/></svg>
<div class="r" style="left:514.00px;top:561.55px;width:2026.50px;height:2.00px;background:#e4e4e4;border-radius:0px;"></div>
<div class="r" style="left:542.60px;top:503.55px;width:26.80px;height:26.60px;box-sizing:border-box;border:1.3px solid #e4e4e4;background:#fafafa;border-radius:4px;"></div>
<div class="t" style="left:629.50px;top:504.00px;font-size:27.00px;line-height:27.00px;color:#18181b;letter-spacing:0.433px;">06-10-2025</div>
<div class="t" style="left:930.50px;top:504.00px;font-size:27.00px;line-height:27.00px;color:#18181b;letter-spacing:-0.451px;">AWS (Amazon Web S...</div>
<div class="t" style="left:1280.00px;top:504.00px;font-size:27.00px;line-height:27.00px;color:#b42318;letter-spacing:-1.010px;">($9,712.23)</div>
<div class="r" style="left:1580.70px;top:497.45px;width:290.70px;height:39.00px;background:#e9ddf5;border-radius:19.5px;"></div>
<svg class="i" style="left:1598.50px;top:501.15px;width:32.00px;height:32.00px;" viewBox="0 0 24 24" fill="none" stroke="#8634d4" stroke-width="1.35" stroke-linecap="round" stroke-linejoin="round"><path d="M9.937 15.5A2 2 0 0 0 8.5 14.063l-6.135-1.582a.5.5 0 0 1 0-.962L8.5 9.936A2 2 0 0 0 9.937 8.5l1.582-6.135a.5.5 0 0 1 .963 0L14.063 8.5A2 2 0 0 0 15.5 9.937l6.135 1.581a.5.5 0 0 1 0 .964L15.5 14.063a2 2 0 0 0-1.437 1.437l-1.582 6.135a.5.5 0 0 1-.963 0z"/><path d="M20 3v4"/><path d="M22 5h-4"/><path d="M4 17v2"/><path d="M5 18H3"/></svg>
<div class="t" style="left:1638.70px;top:506.00px;font-size:23.50px;line-height:23.50px;color:#8634d4;letter-spacing:-0.577px;font-weight:bold;">Hosting and Clou...</div>
<div class="t" style="left:1930.30px;top:504.00px;font-size:27.00px;line-height:27.00px;color:#18181b;letter-spacing:0.387px;">Chase Bank CC - 8345</div>
<svg class="i" style="left:2309px;top:484.95px;width:57px;height:64px" viewBox="0 0 57 64"><rect x="2.2" y="2.6" width="52.2" height="58.9" rx="9.5" fill="none" stroke="#3f3f46" stroke-width="2" stroke-dasharray="3.7 2.9"/></svg>
<svg class="i" style="left:2321.30px;top:501.15px;width:32.00px;height:32.00px;" viewBox="0 0 24 24" fill="none" stroke="#3f3f46" stroke-width="1.6" stroke-linecap="round" stroke-linejoin="round"><path d="M12 17h.01"/><path d="M15 2H6a2 2 0 0 0-2 2v16a2 2 0 0 0 2 2h12a2 2 0 0 0 2-2V7z"/><path d="M9.1 9a3 3 0 0 1 5.82 1c0 2-3 3-3 3"/></svg>
<svg class="i" style="left:2469.30px;top:502.25px;width:28.60px;height:28.60px;" viewBox="0 0 24 24" fill="none" stroke="#18181b" stroke-width="2.6" stroke-linecap="round" stroke-linejoin="round"><circle cx="12" cy="12" r="1"/><circle cx="12" cy="5" r="1"/><circle cx="12" cy="19" r="1"/></svg>
<div class="r" style="left:514.00px;top:655.48px;width:2026.50px;height:2.00px;background:#e4e4e4;border-radius:0px;"></div>
<div class="r" style="left:542.60px;top:597.48px;width:26.80px;height:26.60px;box-sizing:border-box;border:1.3px solid #e4e4e4;background:#fafafa;border-radius:4px;"></div>
<div class="t" style="left:629.50px;top:598.00px;font-size:27.00px;line-height:27.00px;color:#18181b;letter-spacing:0.433px;">06-10-2025</div>
<div class="t" style="left:930.50px;top:598.00px;font-size:27.00px;line-height:27.00px;color:#18181b;letter-spacing:0.545px;">Zoom Video</div>
<div class="t" style="left:1280.00px;top:598.00px;font-size:27.00px;line-height:27.00px;color:#1b7a43;letter-spacing:-0.640px;">$2,345.78</div>
<div class="r" style="left:1580.70px;top:591.38px;width:290.70px;height:39.00px;background:#e9ddf5;border-radius:19.5px;"></div>
<svg class="i" style="left:1598.50px;top:595.08px;width:32.00px;height:32.00px;" viewBox="0 0 24 24" fill="none" stroke="#8634d4" stroke-width="1.35" stroke-linecap="round" stroke-linejoin="round"><path d="M9.937 15.5A2 2 0 0 0 8.5 14.063l-6.135-1.582a.5.5 0 0 1 0-.962L8.5 9.936A2 2 0 0 0 9.937 8.5l1.582-6.135a.5.5 0 0 1 .963 0L14.063 8.5A2 2 0 0 0 15.5 9.937l6.135 1.581a.5.5 0 0 1 0 .964L15.5 14.063a2 2 0 0 0-1.437 1.437l-1.582 6.135a.5.5 0 0 1-.963 0z"/><path d="M20 3v4"/><path d="M22 5h-4"/><path d="M4 17v2"/><path d="M5 18H3"/></svg>
<div class="t" style="left:1638.70px;top:600.00px;font-size:23.50px;line-height:23.50px;color:#8634d4;letter-spacing:-0.577px;font-weight:bold;">Hosting and Clou...</div>
<div class="t" style="left:1930.30px;top:598.00px;font-size:27.00px;line-height:27.00px;color:#18181b;letter-spacing:0.387px;">Chase Bank CC - 8345</div>
<svg class="i" style="left:2309px;top:578.88px;width:57px;height:64px" viewBox="0 0 57 64"><rect x="2.2" y="2.6" width="52.2" height="58.9" rx="9.5" fill="none" stroke="#3f3f46" stroke-width="2" stroke-dasharray="3.7 2.9"/></svg>
<svg class="i" style="left:2321.30px;top:595.08px;width:32.00px;height:32.00px;" viewBox="0 0 24 24" fill="none" stroke="#3f3f46" stroke-width="1.6" stroke-linecap="round" stroke-linejoin="round"><path d="M12 17h.01"/><path d="M15 2H6a2 2 0 0 0-2 2v16a2 2 0 0 0 2 2h12a2 2 0 0 0 2-2V7z"/><path d="M9.1 9a3 3 0 0 1 5.82 1c0 2-3 3-3 3"/></svg>
<svg class="i" style="left:2469.30px;top:596.18px;width:28.60px;height:28.60px;" viewBox="0 0 24 24" fill="none" stroke="#18181b" stroke-width="2.6" stroke-linecap="round" stroke-linejoin="round"><circle cx="12" cy="12" r="1"/><circle cx="12" cy="5" r="1"/><circle cx="12" cy="19" r="1"/></svg>
<div class="r" style="left:514.00px;top:749.41px;width:2026.50px;height:2.00px;background:#e4e4e4;border-radius:0px;"></div>
<div class="r" style="left:542.60px;top:691.41px;width:26.80px;height:26.60px;box-sizing:border-box;border:1.3px solid #e4e4e4;background:#fafafa;border-radius:4px;"></div>
<div class="t" style="left:629.50px;top:692.00px;font-size:27.00px;line-height:27.00px;color:#18181b;letter-spacing:0.433px;">06-10-2025</div>
<div class="t" style="left:930.50px;top:692.00px;font-size:27.00px;line-height:27.00px;color:#18181b;letter-spacing:0.310px;">Delta Airlines</div>
<div class="t" style="left:1280.00px;top:692.00px;font-size:27.00px;line-height:27.00px;color:#1b7a43;letter-spacing:-0.265px;">$4,678.90</div>
<div class="r" style="left:1580.70px;top:685.31px;width:290.70px;height:39.00px;background:#efdbd6;border-radius:19.5px;"></div>
<svg class="i" style="left:1598.50px;top:689.01px;width:32.00px;height:32.00px;" viewBox="0 0 24 24" fill="none" stroke="#b42318" stroke-width="1.35" stroke-linecap="round" stroke-linejoin="round"><path d="M9.937 15.5A2 2 0 0 0 8.5 14.063l-6.135-1.582a.5.5 0 0 1 0-.962L8.5 9.936A2 2 0 0 0 9.937 8.5l1.582-6.135a.5.5 0 0 1 .963 0L14.063 8.5A2 2 0 0 0 15.5 9.937l6.135 1.581a.5.5 0 0 1 0 .964L15.5 14.063a2 2 0 0 0-1.437 1.437l-1.582 6.135a.5.5 0 0 1-.963 0z"/><path d="M20 3v4"/><path d="M22 5h-4"/><path d="M4 17v2"/><path d="M5 18H3"/></svg>
<div class="t" style="left:1638.70px;top:694.00px;font-size:23.50px;line-height:23.50px;color:#b42318;letter-spacing:-0.587px;font-weight:bold;">Travel Expense</div>
<div class="t" style="left:1930.30px;top:692.00px;font-size:27.00px;line-height:27.00px;color:#18181b;letter-spacing:0.387px;">Chase Bank CC - 8345</div>
<svg class="i" style="left:2309px;top:672.81px;width:57px;height:64px" viewBox="0 0 57 64"><rect x="2.2" y="2.6" width="52.2" height="58.9" rx="9.5" fill="none" stroke="#3f3f46" stroke-width="2" stroke-dasharray="3.7 2.9"/></svg>
<svg class="i" style="left:2321.30px;top:689.01px;width:32.00px;height:32.00px;" viewBox="0 0 24 24" fill="none" stroke="#3f3f46" stroke-width="1.6" stroke-linecap="round" stroke-linejoin="round"><path d="M12 17h.01"/><path d="M15 2H6a2 2 0 0 0-2 2v16a2 2 0 0 0 2 2h12a2 2 0 0 0 2-2V7z"/><path d="M9.1 9a3 3 0 0 1 5.82 1c0 2-3 3-3 3"/></svg>
<svg class="i" style="left:2469.30px;top:690.11px;width:28.60px;height:28.60px;" viewBox="0 0 24 24" fill="none" stroke="#18181b" stroke-width="2.6" stroke-linecap="round" stroke-linejoin="round"><circle cx="12" cy="12" r="1"/><circle cx="12" cy="5" r="1"/><circle cx="12" cy="19" r="1"/></svg>
<div class="r" style="left:514.00px;top:843.34px;width:2026.50px;height:2.00px;background:#e4e4e4;border-radius:0px;"></div>
<div class="r" style="left:542.60px;top:785.34px;width:26.80px;height:26.60px;box-sizing:border-box;border:1.3px solid #e4e4e4;background:#fafafa;border-radius:4px;"></div>
<div class="t" style="left:629.50px;top:786.00px;font-size:27.00px;line-height:27.00px;color:#18181b;letter-spacing:0.433px;">06-10-2025</div>
<div class="t" style="left:930.50px;top:786.00px;font-size:27.00px;line-height:27.00px;color:#18181b;letter-spacing:0.737px;">Hubspot</div>
<div class="t" style="left:1280.00px;top:786.00px;font-size:27.00px;line-height:27.00px;color:#b42318;letter-spacing:-0.710px;">($6,123.56)</div>
<div class="r" style="left:1580.70px;top:779.24px;width:290.70px;height:39.00px;background:#e9ddf5;border-radius:19.5px;"></div>
<svg class="i" style="left:1598.50px;top:782.94px;width:32.00px;height:32.00px;" viewBox="0 0 24 24" fill="none" stroke="#8634d4" stroke-width="1.35" stroke-linecap="round" stroke-linejoin="round"><path d="M9.937 15.5A2 2 0 0 0 8.5 14.063l-6.135-1.582a.5.5 0 0 1 0-.962L8.5 9.936A2 2 0 0 0 9.937 8.5l1.582-6.135a.5.5 0 0 1 .963 0L14.063 8.5A2 2 0 0 0 15.5 9.937l6.135 1.581a.5.5 0 0 1 0 .964L15.5 14.063a2 2 0 0 0-1.437 1.437l-1.582 6.135a.5.5 0 0 1-.963 0z"/><path d="M20 3v4"/><path d="M22 5h-4"/><path d="M4 17v2"/><path d="M5 18H3"/></svg>
<div class="t" style="left:1638.70px;top:788.00px;font-size:23.50px;line-height:23.50px;color:#8634d4;letter-spacing:-0.577px;font-weight:bold;">Hosting and Clou...</div>
<div class="t" style="left:1930.30px;top:786.00px;font-size:27.00px;line-height:27.00px;color:#18181b;letter-spacing:0.387px;">Chase Bank CC - 8345</div>
<svg class="i" style="left:2309px;top:766.74px;width:57px;height:64px" viewBox="0 0 57 64"><rect x="2.2" y="2.6" width="52.2" height="58.9" rx="9.5" fill="none" stroke="#3f3f46" stroke-width="2" stroke-dasharray="3.7 2.9"/></svg>
<svg class="i" style="left:2321.30px;top:782.94px;width:32.00px;height:32.00px;" viewBox="0 0 24 24" fill="none" stroke="#3f3f46" stroke-width="1.6" stroke-linecap="round" stroke-linejoin="round"><path d="M12 17h.01"/><path d="M15 2H6a2 2 0 0 0-2 2v16a2 2 0 0 0 2 2h12a2 2 0 0 0 2-2V7z"/><path d="M9.1 9a3 3 0 0 1 5.82 1c0 2-3 3-3 3"/></svg>
<svg class="i" style="left:2469.30px;top:784.04px;width:28.60px;height:28.60px;" viewBox="0 0 24 24" fill="none" stroke="#18181b" stroke-width="2.6" stroke-linecap="round" stroke-linejoin="round"><circle cx="12" cy="12" r="1"/><circle cx="12" cy="5" r="1"/><circle cx="12" cy="19" r="1"/></svg>
<div class="r" style="left:514.00px;top:937.27px;width:2026.50px;height:2.00px;background:#e4e4e4;border-radius:0px;"></div>
<div class="r" style="left:542.60px;top:879.27px;width:26.80px;height:26.60px;box-sizing:border-box;border:1.3px solid #e4e4e4;background:#fafafa;border-radius:4px;"></div>
<div class="t" style="left:629.50px;top:880.00px;font-size:27.00px;line-height:27.00px;color:#18181b;letter-spacing:0.433px;">06-10-2025</div>
<div class="t" style="left:930.50px;top:880.00px;font-size:27.00px;line-height:27.00px;color:#18181b;letter-spacing:0.661px;">Doordash</div>
<div class="t" style="left:1280.00px;top:880.00px;font-size:27.00px;line-height:27.00px;color:#1b7a43;letter-spacing:-1.140px;">$8,490.12</div>
<div class="r" style="left:1580.70px;top:873.17px;width:290.70px;height:39.00px;background:#efdbd6;border-radius:19.5px;"></div>
<svg class="i" style="left:1598.50px;top:876.87px;width:32.00px;height:32.00px;" viewBox="0 0 24 24" fill="none" stroke="#b42318" stroke-width="1.35" stroke-linecap="round" stroke-linejoin="round"><path d="M9.937 15.5A2 2 0 0 0 8.5 14.063l-6.135-1.582a.5.5 0 0 1 0-.962L8.5 9.936A2 2 0 0 0 9.937 8.5l1.582-6.135a.5.5 0 0 1 .963 0L14.063 8.5A2 2 0 0 0 15.5 9.937l6.135 1.581a.5.5 0 0 1 0 .964L15.5 14.063a2 2 0 0 0-1.437 1.437l-1.582 6.135a.5.5 0 0 1-.963 0z"/><path d="M20 3v4"/><path d="M22 5h-4"/><path d="M4 17v2"/><path d="M5 18H3"/></svg>
<div class="t" style="left:1638.70px;top:882.00px;font-size:23.50px;line-height:23.50px;color:#b42318;letter-spacing:-0.406px;font-weight:bold;">Meals and Enterta...</div>
<div class="t" style="left:1930.30px;top:880.00px;font-size:27.00px;line-height:27.00px;color:#18181b;letter-spacing:0.387px;">Chase Bank CC - 8345</div>
<svg class="i" style="left:2309px;top:860.67px;width:57px;height:64px" viewBox="0 0 57 64"><rect x="2.2" y="2.6" width="52.2" height="58.9" rx="9.5" fill="none" stroke="#3f3f46" stroke-width="2" stroke-dasharray="3.7 2.9"/></svg>
<svg class="i" style="left:2321.30px;top:876.87px;width:32.00px;height:32.00px;" viewBox="0 0 24 24" fill="none" stroke="#3f3f46" stroke-width="1.6" stroke-linecap="round" stroke-linejoin="round"><path d="M12 17h.01"/><path d="M15 2H6a2 2 0 0 0-2 2v16a2 2 0 0 0 2 2h12a2 2 0 0 0 2-2V7z"/><path d="M9.1 9a3 3 0 0 1 5.82 1c0 2-3 3-3 3"/></svg>
<svg class="i" style="left:2469.30px;top:877.97px;width:28.60px;height:28.60px;" viewBox="0 0 24 24" fill="none" stroke="#18181b" stroke-width="2.6" stroke-linecap="round" stroke-linejoin="round"><circle cx="12" cy="12" r="1"/><circle cx="12" cy="5" r="1"/><circle cx="12" cy="19" r="1"/></svg>
<div class="r" style="left:514.00px;top:1031.20px;width:2026.50px;height:2.00px;background:#e4e4e4;border-radius:0px;"></div>
<div class="r" style="left:542.60px;top:973.20px;width:26.80px;height:26.60px;box-sizing:border-box;border:1.3px solid #e4e4e4;background:#fafafa;border-radius:4px;"></div>
<div class="t" style="left:629.50px;top:974.00px;font-size:27.00px;line-height:27.00px;color:#18181b;letter-spacing:0.433px;">06-10-2025</div>
<div class="t" style="left:930.50px;top:974.00px;font-size:27.00px;line-height:27.00px;color:#18181b;letter-spacing:0.285px;">Stripe Payout</div>
<div class="t" style="left:1280.00px;top:974.00px;font-size:27.00px;line-height:27.00px;color:#1b7a43;letter-spacing:-1.682px;">$11,234.55</div>
<div class="r" style="left:1580.70px;top:967.10px;width:290.70px;height:39.00px;background:#dcdcdd;border-radius:19.5px;"></div>
<svg class="i" style="left:1598.50px;top:970.60px;width:32.00px;height:32.00px;" viewBox="0 0 24 24" fill="none" stroke="#b42318" stroke-width="1.4" stroke-linecap="round" stroke-linejoin="round"><path d="m21.73 18-8-14a2 2 0 0 0-3.48 0l-8 14A2 2 0 0 0 4 21h16a2 2 0 0 0 1.73-3"/><path d="M12 9v4"/><path d="M12 17h.01"/></svg>
<div class="t" style="left:1638.70px;top:976.00px;font-size:23.50px;line-height:23.50px;color:#57575f;letter-spacing:-0.201px;font-weight:bold;">Uncategorized</div>
<div class="t" style="left:1930.30px;top:974.00px;font-size:27.00px;line-height:27.00px;color:#18181b;letter-spacing:0.387px;">Chase Bank CC - 8345</div>
<svg class="i" style="left:2309px;top:954.60px;width:57px;height:64px" viewBox="0 0 57 64"><rect x="2.2" y="2.6" width="52.2" height="58.9" rx="9.5" fill="none" stroke="#3f3f46" stroke-width="2" stroke-dasharray="3.7 2.9"/></svg>
<svg class="i" style="left:2321.30px;top:970.80px;width:32.00px;height:32.00px;" viewBox="0 0 24 24" fill="none" stroke="#3f3f46" stroke-width="1.6" stroke-linecap="round" stroke-linejoin="round"><path d="M12 17h.01"/><path d="M15 2H6a2 2 0 0 0-2 2v16a2 2 0 0 0 2 2h12a2 2 0 0 0 2-2V7z"/><path d="M9.1 9a3 3 0 0 1 5.82 1c0 2-3 3-3 3"/></svg>
<svg class="i" style="left:2469.30px;top:971.90px;width:28.60px;height:28.60px;" viewBox="0 0 24 24" fill="none" stroke="#18181b" stroke-width="2.6" stroke-linecap="round" stroke-linejoin="round"><circle cx="12" cy="12" r="1"/><circle cx="12" cy="5" r="1"/><circle cx="12" cy="19" r="1"/></svg>
<div class="r" style="left:542.60px;top:1067.13px;width:26.80px;height:26.60px;box-sizing:border-box;border:1.3px solid #e4e4e4;background:#fafafa;border-radius:4px;"></div>
<div class="r" style="left:1284.50px;top:1067.00px;width:3.00px;height:3.00px;background:#1b7a43;border-radius:1.5px;"></div>
<div class="r" style="left:1580.70px;top:1061.03px;width:290.70px;height:39.00px;background:#dcdcdd;border-radius:19.5px;"></div>
<svg class="i" style="left:1598.50px;top:1064.53px;width:32.00px;height:32.00px;" viewBox="0 0 24 24" fill="none" stroke="#b42318" stroke-width="1.4" stroke-linecap="round" stroke-linejoin="round"><path d="m21.73 18-8-14a2 2 0 0 0-3.48 0l-8 14A2 2 0 0 0 4 21h16a2 2 0 0 0 1.73-3"/><path d="M12 9v4"/><path d="M12 17h.01"/></svg>
<svg class="i" style="left:2309px;top:1048.53px;width:57px;height:64px" viewBox="0 0 57 64"><rect x="2.2" y="2.6" width="52.2" height="58.9" rx="9.5" fill="none" stroke="#3f3f46" stroke-width="2" stroke-dasharray="3.7 2.9"/></svg>
<svg class="i" style="left:2321.30px;top:1064.73px;width:32.00px;height:32.00px;" viewBox="0 0 24 24" fill="none" stroke="#3f3f46" stroke-width="1.6" stroke-linecap="round" stroke-linejoin="round"><path d="M12 17h.01"/><path d="M15 2H6a2 2 0 0 0-2 2v16a2 2 0 0 0 2 2h12a2 2 0 0 0 2-2V7z"/><path d="M9.1 9a3 3 0 0 1 5.82 1c0 2-3 3-3 3"/></svg>
</div>
<div class="r" style="left:513.00px;top:1748.40px;width:233.40px;height:56.30px;box-sizing:border-box;border:2px solid #e4e4e4;background:transparent;border-radius:10px;"></div>
<div class="t" style="left:534.00px;top:1765.00px;font-size:25.80px;line-height:25.80px;color:#18181b;letter-spacing:0.928px;">15 per page</div>
<svg class="i" style="left:697.60px;top:1762.10px;width:28.80px;height:28.80px;" viewBox="0 0 24 24" fill="none" stroke="#18181b" stroke-width="2" stroke-linecap="round" stroke-linejoin="round"><path d="m6 9 6 6 6-6"/></svg>
<svg class="i" style="left:1222.70px;top:1762.40px;width:28.80px;height:28.80px;" viewBox="0 0 24 24" fill="none" stroke="#18181b" stroke-width="2" stroke-linecap="round" stroke-linejoin="round"><path d="m15 18-6-6 6-6"/></svg>
<div class="t" style="left:1259.40px;top:1765.00px;font-size:25.80px;line-height:25.80px;color:#18181b;letter-spacing:0.802px;">Previous</div>
<div class="t" style="left:1427.70px;top:1765.00px;font-size:25.80px;line-height:25.80px;color:#18181b;letter-spacing:0.000px;">1</div>
<div class="r" style="left:1468.90px;top:1748.90px;width:55.80px;height:55.30px;box-sizing:border-box;border:2px solid #e4e4e4;background:transparent;border-radius:10px;"></div>
<div class="t" style="left:1489.20px;top:1765.00px;font-size:25.80px;line-height:25.80px;color:#18181b;letter-spacing:0.000px;">2</div>
<div class="t" style="left:1553.90px;top:1765.00px;font-size:25.80px;line-height:25.80px;color:#18181b;letter-spacing:0.000px;">3</div>
<svg class="i" style="left:1615.50px;top:1761.80px;width:30.00px;height:30.00px;" viewBox="0 0 24 24" fill="none" stroke="#18181b" stroke-width="2.5" stroke-linecap="round" stroke-linejoin="round"><circle cx="12" cy="12" r="1"/><circle cx="19" cy="12" r="1"/><circle cx="5" cy="12" r="1"/></svg>
<div class="t" style="left:1692.80px;top:1765.00px;font-size:25.80px;line-height:25.80px;color:#18181b;letter-spacing:0.318px;">Next</div>
<svg class="i" style="left:1754.80px;top:1762.40px;width:28.80px;height:28.80px;" viewBox="0 0 24 24" fill="none" stroke="#18181b" stroke-width="2" stroke-linecap="round" stroke-linejoin="round"><path d="m9 18 6-6-6-6"/></svg>
</body></html>
